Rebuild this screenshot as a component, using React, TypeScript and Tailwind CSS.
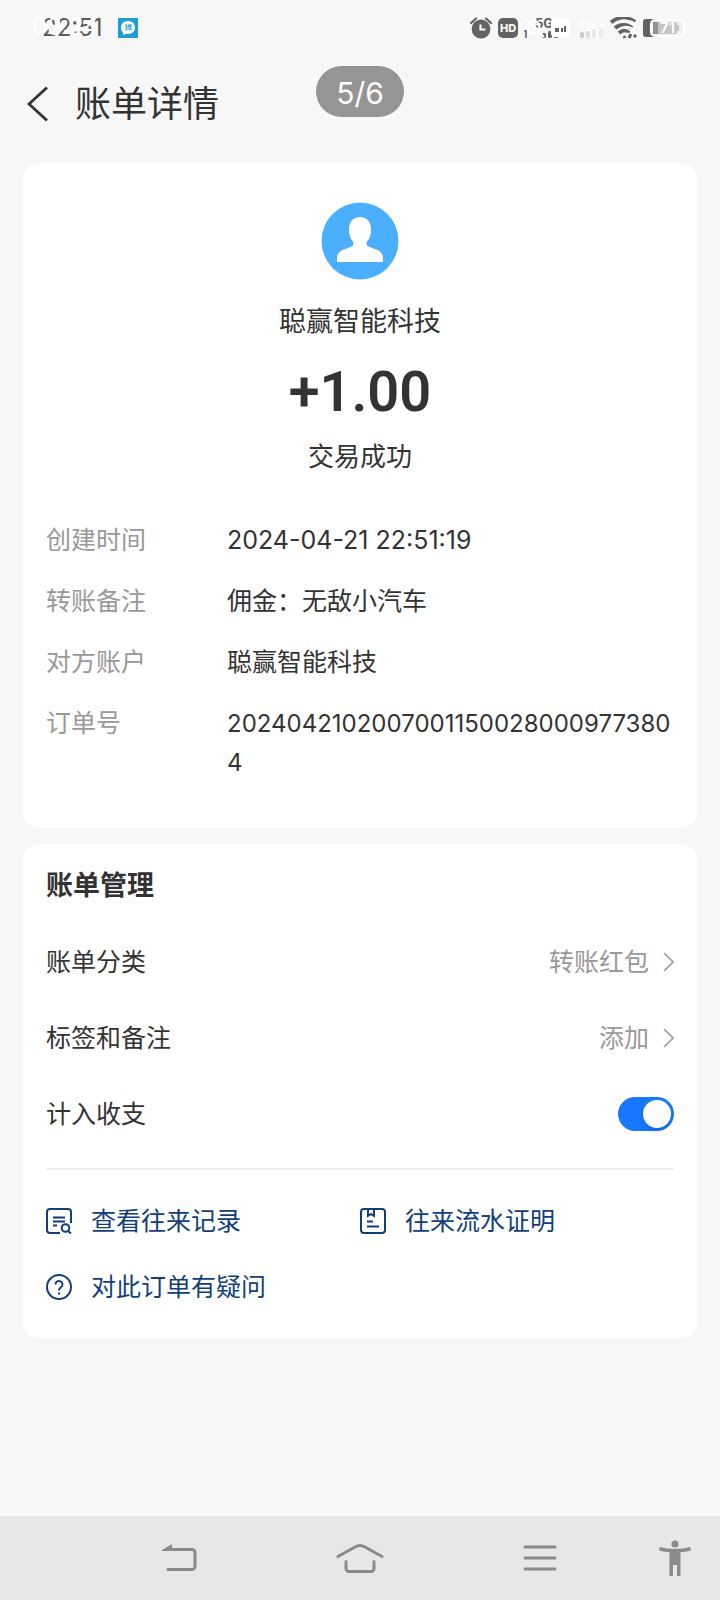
import { useState } from "react";
import type { ReactNode } from "react";

const details = [
  { label: "创建时间", value: "2024-04-21 22:51:19" },
  { label: "转账备注", value: "佣金：无敌小汽车" },
  { label: "对方账户", value: "聪赢智能科技" },
  { label: "订单号", value: "20240421020070011500280009773804", long: true },
];

const AlarmIcon = () => (
  <svg width="22" height="22" viewBox="0 0 22 22" fill="none" aria-hidden="true">
    <circle cx="11" cy="12" r="9.4" fill="#636363" />
    <path d="M1 6 6 1.5M16 1.5 21 6" stroke="#636363" strokeWidth="2.2" strokeLinecap="round" />
    <path d="M10.5 7.5v5h5" stroke="#f7f7f7" strokeWidth="2.2" />
  </svg>
);

/* Two sets of signal indicators drawn over each other */
const SignalIcons = () => (
  <svg width="82" height="24" viewBox="0 0 82 24" fontFamily="Inter, sans-serif" fontWeight="700" aria-hidden="true">
    <text x="-1" y="22" fontSize="10" fill="#636363">1</text>
    <text x="11" y="12" fontSize="13" fill="#636363">5G</text>
    <g fill="#636363">
      <rect x="18" y="17" width="4" height="5" rx="1.5" />
      <rect x="24" y="15" width="4" height="7" rx="1.5" />
      <rect x="30" y="15" width="4" height="7" rx="1.5" />
    </g>
    <path d="M2 3 20 21M5 17V10a5 5 0 0 1 9-3l3 10H5" fill="none" stroke="#fff" strokeWidth="2" />
    <rect x="27" y="2" width="19" height="19" rx="4" fill="#fff" />
    <path d="M32 16v-3h2v3M38 16v-4M41 16v-6" stroke="#636363" strokeWidth="2" fill="none" />
    <text x="53" y="12" fontSize="12" fill="#fff">4G</text>
    <rect x="56" y="16" width="4" height="6" rx="1.5" fill="#cacaca" />
    <rect x="62" y="14" width="4" height="8" rx="1.5" fill="#dedede" />
    <rect x="68" y="12" width="4" height="10" rx="1.5" fill="#e8e8e8" />
    <rect x="75" y="10" width="4" height="12" rx="1.5" fill="#ececec" />
    <path d="M62 14h4M68 12h4M75 10h4M67 14v7M73 13v8" stroke="#fff" strokeWidth="2" />
  </svg>
);

const WifiIcon = () => (
  <svg width="30" height="22" viewBox="0 0 30 22" fill="none" aria-hidden="true">
    <path d="M1 5.500C8-.5 18-.5 25 5M5 11c5-4 12-4 17 0M9 16c3-3 7-3 10 0" stroke="#636363" strokeWidth="4" />
    <path d="M4 7c7-5 16-5 23 1M8 13c5-4 11-4 16 0M12 18c2-2 6-2 8 0" stroke="#fff" strokeWidth="2" />
    <path d="m15 21-1-2M19 21l2-4M24 20l2-2" stroke="#636363" strokeWidth="3" />
  </svg>
);

const BatteryIcon = () => (
  <svg width="44" height="20" viewBox="0 0 44 20" fontFamily="Inter, sans-serif" aria-hidden="true">
    <path d="M4 1h8v18H4a3 3 0 0 1-3-3V4a3 3 0 0 1 3-3Z" fill="#636363" />
    <rect x="9" y="2" width="33" height="16" rx="4" fill="#f1f1f1" stroke="#fff" strokeWidth="2" />
    <path d="M12 4h21a2 2 0 0 1 2 2v1h2v6h-2v1a2 2 0 0 1-2 2H12a1 1 0 0 1-1-1V5a1 1 0 0 1 1-1Z" fill="#c5c5c5" />
    <path d="M11 4h5v12h-5z" fill="#929292" />
    <text x="18" y="15" fontSize="15" fontWeight="600" fill="#fff">71</text>
  </svg>
);

const StatusBar = () => (
  <div className="flex h-14 items-center justify-between pl-[42px] pr-[34px] text-[#5c5c5c]">
    <div className="flex items-center gap-[15px]">
      <div className="relative text-[24px] leading-8">
        22:51
        <span className="absolute -left-2.5 -top-px text-white">08:24</span>
      </div>
      <svg width="20" height="20" viewBox="0 0 20 20" aria-hidden="true">
        <path d="M0 0h20v20H0z" fill="#1c9fd0" />
        <path d="M10 3c4.200 0 7 2.800 7 6.500s-3 6.500-7 6.500c-.8 0-1.500 0-2-.3L5 17v-2.500C3.600 13.300 3 11.500 3 9.500 3 5.800 5.800 3 10 3Z" fill="#fff" />
        <path d="M7 7h2v5M7 9h2M7 12l2-1M11 6v6l2-1M10 8h4M13 6l-1 3 2 3" stroke="#1c9fd0" fill="none" />
      </svg>
    </div>
    <div className="flex items-center">
      <AlarmIcon />
      <svg className="mx-1.5" width="20" height="20" viewBox="0 0 20 20" aria-hidden="true">
        <rect width="20" height="20" rx="5" fill="#636363" />
        <text x="10" y="14" textAnchor="middle" fontSize="11" fontWeight="800" fontFamily="Inter, sans-serif" fill="#f7f7f7">
          HD
        </text>
      </svg>
      <SignalIcons />
      <span className="ml-1 mr-0.5"><WifiIcon /></span>
      <BatteryIcon />
    </div>
  </div>
);

const Chevron = () => (
  <svg width="11" height="20" viewBox="0 0 11 20" fill="none" aria-hidden="true">
    <path d="m1 1 9 9-9 9" stroke="#999" strokeWidth="1.6" />
  </svg>
);

const SettingRow = ({ label, value }: { label: string; value: string }) => (
  <button type="button" className="flex h-[76px] w-full items-center justify-between">
    <span>{label}</span>
    <span className="flex items-center gap-3.5 text-[#999]">
      {value}
      <Chevron />
    </span>
  </button>
);

const ActionLink = ({ icon, children }: { icon: ReactNode; children: ReactNode }) => (
  <a href="#" className="flex h-10 items-center gap-[19px]">
    <svg width="26" height="26" viewBox="0 0 26 26" fill="none" stroke="currentColor" strokeWidth="2" aria-hidden="true">
      {icon}
    </svg>
    {children}
  </a>
);

const App = () => {
  const [counted, setCounted] = useState(true);

  return (
    <div className="relative flex min-h-screen flex-col bg-[#f7f7f7] font-['Inter','Noto_Sans_CJK_SC',sans-serif] text-[25px] leading-[39px] text-[#333]">
      <StatusBar />

      {/* Header */}
      <header className="flex h-[107px] items-start gap-[27px] pl-[27px] pt-5">
        <button type="button" aria-label="返回" className="flex h-14 items-center">
          <svg width="21" height="36" viewBox="0 0 21 36" fill="none" aria-hidden="true">
            <path d="M20 1.500 2 18l18 16.500" stroke="#333" strokeWidth="2.800" />
          </svg>
        </button>
        <h1 className="text-[36px] leading-[56px]">账单详情</h1>
      </header>
      <div className="absolute left-1/2 top-[66px] flex h-[51px] w-[88px] -translate-x-1/2 items-center justify-center rounded-full bg-[#959595] pt-1 text-[30px] text-white">
        5/6
      </div>

      <main className="flex flex-col gap-4 px-[23px]">
        {/* Transaction */}
        <section className="rounded-2xl bg-white px-[23px] pb-[46px] pt-[39px]">
          <div className="flex flex-col items-center">
            <svg width="78" height="78" viewBox="0 0 78 78" aria-hidden="true">
              <circle cx="39" cy="39" r="38.500" fill="#4aafff" />
              <path
                d="M39 15c7 0 11 5 11 12.500 0 5-1 8.500-3.500 11.500-1.500 2-1.500 4.500 1 5.500l9 3.500c4 2 5.500 5 5.500 8v2.500c0 1-.7 1.500-1.700 1.500H17.700c-1 0-1.700-.5-1.700-1.500V56c0-3 1.500-6 5.500-8l9-3.500c2.500-1 2.500-3.500 1-5.500-2.500-3-3.500-6.500-3.500-11.500C28 20 32 15 39 15Z"
                fill="#fff"
              />
            </svg>
            <p className="mt-[22px] text-[27px] leading-10">聪赢智能科技</p>
            <p className="mt-5 font-['Roboto',sans-serif] text-[56px] font-semibold leading-[60px]">+1.00</p>
            <p className="mt-[15px] text-[26px]">交易成功</p>
          </div>
          <dl className="mt-[45px] flex flex-col gap-[22px]">
            {details.map((item) => (
              <div key={item.label} className="flex">
                <dt className="w-[181px] shrink-0 text-[#999]">{item.label}</dt>
                <dd className={item.long ? "min-w-0 flex-1 break-all text-[24px]" : "min-w-0 flex-1"}>{item.value}</dd>
              </div>
            ))}
          </dl>
        </section>

        {/* Bill management */}
        <section className="rounded-2xl bg-white px-[23px] pb-[31px] pt-[22px]">
          <h2 className="mb-[18px] text-[27px] font-bold leading-10">账单管理</h2>
          <SettingRow label="账单分类" value="转账红包" />
          <SettingRow label="标签和备注" value="添加" />
          <label className="flex h-[76px] items-center justify-between">
            计入收支
            <span className="relative h-[34px] w-14">
              <input
                type="checkbox"
                role="switch"
                checked={counted}
                onChange={(e) => setCounted(e.target.checked)}
                className="peer block h-full w-full appearance-none rounded-full bg-gray-300 checked:bg-[#1677ff]"
              />
              <span className="pointer-events-none absolute left-[3px] top-[3px] size-7 rounded-full bg-white shadow-md peer-checked:left-[25px]" />
            </span>
          </label>
          <hr className="mt-4 border-t-2 border-[#eee]" />
          <div className="mt-[31px] grid grid-cols-2 gap-y-[26px] text-[#123f7b]">
            <ActionLink
              icon={
                <>
                  <path d="M25 15V4a3 3 0 0 0-3-3H4a3 3 0 0 0-3 3v18a3 3 0 0 0 3 3h10" />
                  <path d="M7 9.500h12M7 13.500h12M7 17.500h4" />
                  <circle cx="19.500" cy="20" r="3.800" />
                  <path d="m22 23 3 2.500" />
                </>
              }
            >
              查看往来记录
            </ActionLink>
            <ActionLink
              icon={
                <>
                  <rect x="1" y="1" width="24" height="24" rx="3" />
                  <path d="M8 1v7l3-2 3 2V1M7 13.500h6M7 18.500h12" />
                </>
              }
            >
              往来流水证明
            </ActionLink>
            <ActionLink
              icon={
                <>
                  <circle cx="13" cy="13" r="12" />
                  <path d="M9.500 10.500a3.500 3.500 0 1 1 5.500 2.800c-1.400 1-2 1.600-2 3.200M13 18.500v2" />
                </>
              }
            >
              对此订单有疑问
            </ActionLink>
          </div>
        </section>
      </main>

      {/* System navigation */}
      <nav className="mt-auto grid h-[84px] grid-cols-[2fr_2fr_2fr_1fr] items-center bg-[#e7e7e7] pl-[12.5%] text-[#8a8a8a]">
        <button type="button" aria-label="后退" className="flex justify-center">
          <svg width="36" height="30" viewBox="0 0 36 30" fill="none" aria-hidden="true">
            <path d="M6 26.500h24a3 3 0 0 0 3-3v-14a3 3 0 0 0-3-3H6" stroke="currentColor" strokeWidth="3" strokeLinecap="round" />
            <path d="M0 7 10 1v7H0Z" fill="currentColor" />
          </svg>
        </button>
        <button type="button" aria-label="主页" className="flex justify-center">
          <svg width="48" height="30" viewBox="0 0 48 30" fill="none" stroke="currentColor" strokeWidth="3" strokeLinecap="round" aria-hidden="true">
            <path d="M2 13.500 19 4c3.500-2 6.500-2 10 0l17 9.500" />
            <path d="M10 18.500v7a3 3 0 0 0 3 3h22a3 3 0 0 0 3-3v-7" />
          </svg>
        </button>
        <button type="button" aria-label="菜单" className="flex justify-center">
          <svg width="34" height="28" viewBox="0 0 34 28" stroke="currentColor" strokeWidth="3" strokeLinecap="round" aria-hidden="true">
            <path d="M2 3h30M2 14h30M2 25h30" />
          </svg>
        </button>
        <button type="button" aria-label="无障碍" className="flex justify-center">
          <svg width="32" height="36" viewBox="0 0 32 36" fill="currentColor" aria-hidden="true">
            <circle cx="16" cy="4" r="3.600" />
            <path d="M.8 7C10 9.500 22 9.500 31.200 7l.8 3.500c-3.500 1-7 1.500-10.500 1.800V36H18V25h-4v11h-3.500V12.300C7 12 3.500 11.500 0 10.500Z" />
          </svg>
        </button>
      </nav>
    </div>
  );
};

export default App;
